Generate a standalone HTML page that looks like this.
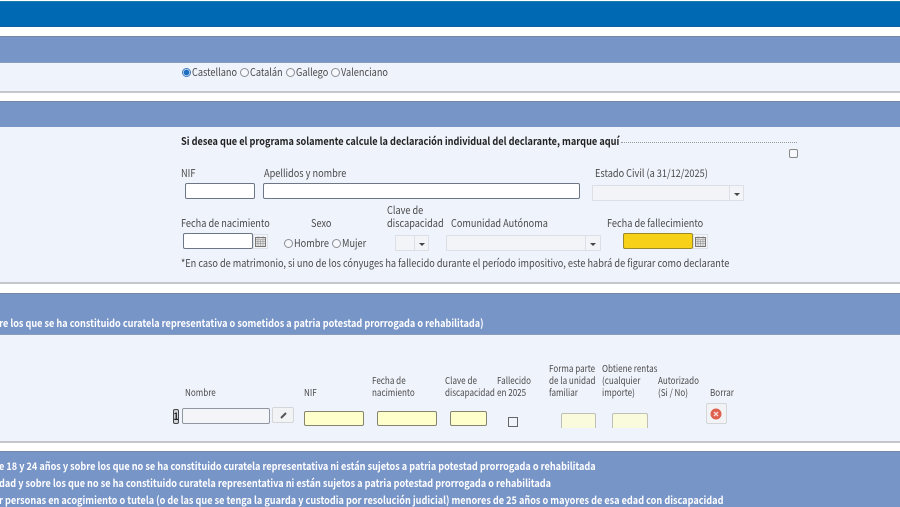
<!DOCTYPE html>
<html lang="es"><head><meta charset="utf-8"><title>Declaración</title>
<style>
html{margin:0;padding:0;background:#fff;width:900px;height:507px;overflow:hidden}
body{margin:0;padding:0;background:#fff;position:relative;width:900px;height:507px;overflow:hidden;contain:paint;font-family:"Noto Sans CJK JP","Liberation Sans",sans-serif;font-size:10.5px;color:#4a4a4a}
#w{left:0;top:0;width:900px;height:507px;filter:blur(.35px)}
div{position:absolute;box-sizing:border-box}
.t{white-space:nowrap;line-height:14px;height:14px;transform:scaleX(.873);transform-origin:0 50%}
.s{font-size:9.5px;transform:scaleX(.85)}
.h{left:-6px;width:912px;background:#7895c8;border-top:1px solid #7487a8;border-bottom:1px solid #8a9cbc}
.p{left:-6px;width:912px;background:#eff3fb;border-bottom:2px solid #c6c7ca}
.w{color:#fff;font-weight:700;transform:scaleX(.869)}
.i{background:#fff;border:1px solid #6d7684;border-radius:2px}
.y{background:#ffffcc;border:1px solid #85856f;border-radius:2px;height:15px;top:411px}
.d{background:#f3f4f7;border:1px solid #dcdfe5;border-radius:1px}
.ar{width:0;height:0;border-left:3px solid transparent;border-right:3px solid transparent;border-top:3px solid #444}
.r{width:9px;height:9px;border:1px solid #8a8f96;border-radius:50%;background:#f6f8fc}
</style></head><body><div id="w">
<div style="left:-6px;top:1px;width:912px;height:26px;background:#0069b4;border-top:1px solid #1b7da8;border-bottom:1px solid #0d5f9f"></div>

<div class="h" style="top:36px;height:27px"></div>
<div class="p" style="top:63px;height:30px"></div>
<div class="r" style="left:182px;top:68px;border-color:#3a78c0;background:radial-gradient(circle,#1f6fc0 55%,#fff 62%)"></div>
<div class="t" style="left:192px;top:66px">Castellano</div>
<div class="r" style="left:240px;top:68px"></div>
<div class="t" style="left:250px;top:66px">Catalán</div>
<div class="r" style="left:286px;top:68px"></div>
<div class="t" style="left:296px;top:66px">Gallego</div>
<div class="r" style="left:331px;top:68px"></div>
<div class="t" style="left:341px;top:66px">Valenciano</div>

<div class="h" style="top:101px;height:27px"></div>
<div class="p" style="top:127px;height:157px"></div>
<div class="t" style="left:181px;top:135px;font-weight:700;color:#222">Si desea que el programa solamente calcule la declaración individual del declarante, marque aquí</div>
<div style="left:621px;top:142px;width:176px;border-top:1px dotted #999;height:1px"></div>
<div style="left:789px;top:149px;width:9px;height:9px;border:1px solid #888;border-radius:2px;background:#f6f8fc"></div>

<div class="t" style="left:181px;top:167px">NIF</div>
<div class="t" style="left:264px;top:167px">Apellidos y nombre</div>
<div class="t" style="left:595px;top:167px">Estado Civil (a 31/12/2025)</div>
<div class="i" style="left:185px;top:183px;width:70px;height:16px"></div>
<div class="i" style="left:263px;top:183px;width:317px;height:16px"></div>
<div class="d" style="left:592px;top:185px;width:152px;height:16px"></div>
<div style="left:729px;top:186px;width:1px;height:14px;background:#dcdfe5"></div>
<div class="ar" style="left:734px;top:193px"></div>

<div class="t" style="left:387px;top:204px">Clave de</div>
<div class="t" style="left:181px;top:217px">Fecha de nacimiento</div>
<div class="t" style="left:311px;top:217px">Sexo</div>
<div class="t" style="left:387px;top:217px">discapacidad</div>
<div class="t" style="left:451px;top:217px">Comunidad Autónoma</div>
<div class="t" style="left:607px;top:217px">Fecha de fallecimiento</div>

<div class="i" style="left:183px;top:233px;width:70px;height:16px"></div>
<div style="left:253px;top:234px;width:15px;height:15px;background:#f4f5f8;border:1px solid #dcdfe5"></div>
<svg style="position:absolute;left:255px;top:236px" width="11" height="11" viewBox="0 0 11 11"><rect x=".5" y="1.5" width="10" height="9" fill="#e2e2e2" stroke="#777"/><path d="M3 0V3M8 0V3M1 3.5H10M1 5.5H10M1 7.5H10M3 4V10M5.5 4V10M8 4V10" stroke="#888" fill="none" stroke-width=".5"/></svg>
<div class="r" style="left:284px;top:239px"></div>
<div class="t" style="left:294px;top:237px">Hombre</div>
<div class="r" style="left:332px;top:239px"></div>
<div class="t" style="left:342px;top:237px">Mujer</div>
<div class="d" style="left:395px;top:235px;width:34px;height:16px"></div>
<div style="left:414px;top:236px;width:1px;height:14px;background:#dcdfe5"></div>
<div class="ar" style="left:419px;top:243px"></div>
<div class="d" style="left:446px;top:235px;width:155px;height:16px"></div>
<div style="left:585px;top:236px;width:1px;height:14px;background:#dcdfe5"></div>
<div class="ar" style="left:590px;top:243px"></div>
<div style="left:623px;top:233px;width:70px;height:16px;background:#f7d117;border:1px solid #9b8a2a;border-radius:2px"></div>
<div style="left:693px;top:234px;width:15px;height:15px;background:#f4f5f8;border:1px solid #dcdfe5"></div>
<svg style="position:absolute;left:695px;top:236px" width="11" height="11" viewBox="0 0 11 11"><rect x=".5" y="1.5" width="10" height="9" fill="#e2e2e2" stroke="#777"/><path d="M3 0V3M8 0V3M1 3.5H10M1 5.5H10M1 7.5H10M3 4V10M5.5 4V10M8 4V10" stroke="#888" fill="none" stroke-width=".5"/></svg>
<div class="t" style="left:181px;top:257px">*En caso de matrimonio, si uno de los cónyuges ha fallecido durante el período impositivo, este habrá de figurar como declarante</div>

<div class="h" style="top:293px;height:42px"></div>
<div class="t w" style="left:-17px;top:317px">sobre los que se ha constituido curatela representativa o sometidos a patria potestad prorrogada o rehabilitada)</div>
<div class="p" style="top:335px;height:108px"></div>

<div class="t s" style="left:549px;top:361px">Forma parte</div>
<div class="t s" style="left:602px;top:361px">Obtiene rentas</div>
<div class="t s" style="left:372px;top:373px">Fecha de</div>
<div class="t s" style="left:445px;top:373px">Clave de</div>
<div class="t s" style="left:497px;top:373px">Fallecido</div>
<div class="t s" style="left:549px;top:373px">de la unidad</div>
<div class="t s" style="left:602px;top:373px">(cualquier</div>
<div class="t s" style="left:658px;top:373px">Autorizado</div>
<div class="t s" style="left:185px;top:385px">Nombre</div>
<div class="t s" style="left:304px;top:385px">NIF</div>
<div class="t s" style="left:372px;top:385px">nacimiento</div>
<div class="t s" style="left:445px;top:385px">discapacidad</div>
<div class="t s" style="left:497px;top:385px">en 2025</div>
<div class="t s" style="left:549px;top:385px">familiar</div>
<div class="t s" style="left:602px;top:385px">importe)</div>
<div class="t s" style="left:658px;top:385px">(Si / No)</div>
<div class="t s" style="left:710px;top:385px">Borrar</div>

<div style="left:173px;top:409px;width:6px;height:15px;border:1px solid #444;border-radius:2px;background:#cfd3da"></div>
<div class="t" style="left:173px;top:409px;width:7px;text-align:center;font-size:10px;font-weight:700;color:#222">1</div>
<div style="left:182px;top:408px;width:88px;height:16px;background:#f3f5f9;border:1px solid #8f96a0;border-radius:2px"></div>
<div style="left:272px;top:407px;width:22px;height:16px;background:#f2f3f5;border:1px solid #d4d6da;border-radius:2px"></div>
<svg style="position:absolute;left:279px;top:410px" width="9" height="10" viewBox="0 0 9 10"><path d="M2 8L7 3" stroke="#555" stroke-width="2" fill="none"/></svg>
<div class="y" style="left:304px;width:60px"></div>
<div class="y" style="left:377px;width:60px"></div>
<div class="y" style="left:450px;width:37px"></div>
<div style="left:508px;top:417px;width:10px;height:10px;border:1px solid #666;background:#eff3fb"></div>
<div style="left:561px;top:413px;width:35px;height:15px;background:#fafbdc;border:1px solid #bfc0b5;border-bottom:0;border-radius:2px 2px 0 0"></div>
<div style="left:612px;top:413px;width:36px;height:15px;background:#fafbdc;border:1px solid #bfc0b5;border-bottom:0;border-radius:2px 2px 0 0"></div>
<div style="left:706px;top:403px;width:21px;height:21px;background:#f2f3f5;border:1px solid #d4d6da;border-radius:2px"></div>
<svg style="position:absolute;left:710px;top:408px" width="12" height="12" viewBox="0 0 12 12"><circle cx="6" cy="6" r="5.5" fill="#e0604f"/><path d="M4 4L8 8M8 4L4 8" stroke="#f6dcd8" stroke-width="1.4"/></svg>

<div class="h" style="top:451px;height:62px;border-bottom:0"></div>
<div class="t w" style="left:-1px;top:460px">e 18 y 24 años y sobre los que no se ha constituido curatela representativa ni están sujetos a patria potestad prorrogada o rehabilitada</div>
<div class="t w" style="left:-1px;top:477px">dad y sobre los que no se ha constituido curatela representativa ni están sujetos a patria potestad prorrogada o rehabilitada</div>
<div class="t w" style="left:-1px;top:494px">r personas en acogimiento o tutela (o de las que se tenga la guarda y custodia por resolución judicial) menores de 25 años o mayores de esa edad con discapacidad</div>
</div></body></html>
